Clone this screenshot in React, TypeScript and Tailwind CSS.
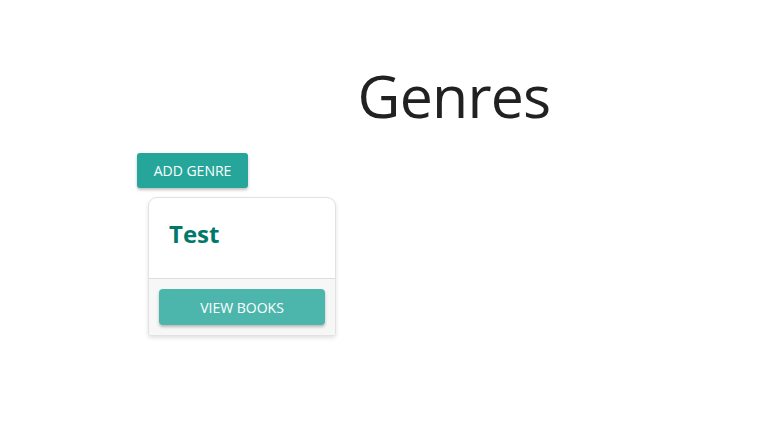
export default function App() {
  return (
    <div className="min-h-[428px] bg-white font-['Open_Sans',sans-serif] text-[#212121]">
      <div className="pl-[137px] pt-[60px]">
        <h1 className="text-center text-[59px] font-normal leading-[70px] tracking-[-0.8px]">
          Genres
        </h1>
        <button className="mt-[23px] h-[35px] w-[111px] rounded-[3px] bg-[#26a69a] text-[14px] uppercase text-white shadow-[0_2px_3px_rgba(0,0,0,0.25)]">
          Add Genre
        </button>
        <div className="ml-[11px] mt-[9px] w-[188px] overflow-hidden rounded-t-[9px] rounded-b-[3px] border border-[#e2e2e2] bg-white shadow-[0_2px_4px_rgba(0,0,0,0.12)]">
          <div className="h-[80px] px-[20px] pt-[19px]">
            <h2 className="text-[24px] font-bold leading-[34px] text-[#00796b]">Test</h2>
          </div>
          <div className="border-t border-[#dcdcdc] bg-[#f7f7f7] px-[10px] pb-[10px] pt-[10px]">
            <button className="h-[36px] w-full rounded-[4px] bg-[#4db6ac] text-[14px] uppercase text-white shadow-[0_2px_3px_rgba(0,0,0,0.25)]">
              View Books
            </button>
          </div>
        </div>
      </div>
    </div>
  );
}
